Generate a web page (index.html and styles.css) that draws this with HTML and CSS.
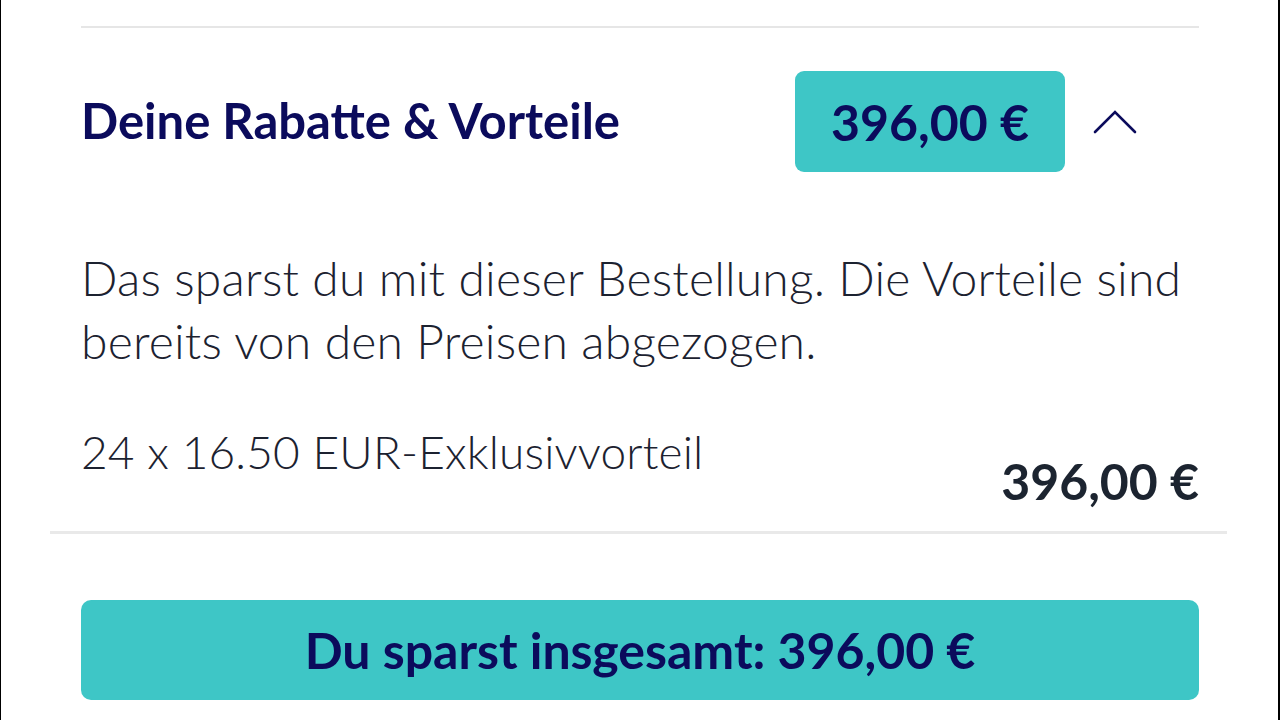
FILE: index.html
```html
<!DOCTYPE html>
<html lang="de">
<head>
<meta charset="utf-8">
<link rel="stylesheet" href="styles.css">
</head>
<body>
<div class="frame">
  <div class="content">
    <div class="rule-top"></div>
    <div class="head">
      <h2 class="title">Deine Rabatte &amp; Vorteile</h2>
      <div class="head-right">
        <div class="badge">396,00 €</div>
        <svg class="chev" width="44" height="28" viewBox="0 0 44 28">
          <path d="M2 24 L22 4 L42 24" fill="none" stroke="#0b0b5c" stroke-width="2.6" stroke-linecap="round" stroke-linejoin="miter"/>
        </svg>
      </div>
    </div>
    <p class="desc">Das sparst du mit dieser Bestellung. Die Vorteile sind bereits von den Preisen abgezogen.</p>
    <div class="item">
      <span class="item-label">24 x 16.50 EUR-Exklusivvorteil</span>
      <span class="item-price">396,00 €</span>
    </div>
  </div>
  <div class="rule-bottom"></div>
  <div class="content">
    <div class="total">Du sparst insgesamt: 396,00 €</div>
  </div>
</div>
</body>
</html>
```
FILE: styles.css
```css
html, body {
  margin: 0;
  padding: 0;
  background: #ffffff;
}
.frame {
  width: 1280px;
  height: 720px;
  box-sizing: border-box;
  border-left: 1px solid #000;
  border-right: 2px solid #000;
  overflow: hidden;
  font-family: Lato, "Noto Sans", sans-serif;
}
.content {
  padding: 0 79px 0 80px;
}
.rule-top {
  margin-top: 26px;
  height: 2px;
  background: #e6e6e6;
}
.head {
  display: flex;
  align-items: center;
  justify-content: space-between;
  margin-top: 43px;
  height: 101px;
}
.title {
  margin: 0 0 4px;
  font-size: 49px;
  font-weight: 700;
  color: #0b0b5c;
}
.head-right {
  display: flex;
  align-items: center;
  gap: 28px;
  padding-right: 62px;
}
.badge {
  width: 270px;
  height: 101px;
  box-sizing: border-box;
  display: flex;
  align-items: center;
  justify-content: center;
  background: #3ec6c6;
  border-radius: 9px;
  font-size: 50px;
  font-weight: 700;
  color: #0b0b5c;
}
.chev {
  display: block;
}
.desc {
  margin: 74px 0 0;
  font-size: 48px;
  line-height: 63px;
  font-weight: 300;
  letter-spacing: 0.2px;
  color: #1c2230;
}
.item {
  display: flex;
  justify-content: space-between;
  align-items: flex-start;
  margin-top: 50px;
}
.item-label {
  font-size: 46px;
  font-weight: 300;
  letter-spacing: 0.15px;
  color: #1c2230;
  line-height: 60px;
}
.item-price {
  font-size: 50px;
  font-weight: 700;
  color: #1c2430;
  line-height: 60px;
  margin-top: 29px;
}
.rule-bottom {
  margin: 20px 51px 0 49px;
  height: 3px;
  background: #e9e9e9;
}
.total {
  margin-top: 66px;
  height: 100px;
  display: flex;
  align-items: center;
  justify-content: center;
  background: #3ec6c6;
  border-radius: 10px;
  font-size: 50px;
  font-weight: 700;
  color: #0b0b5c;
}
```
